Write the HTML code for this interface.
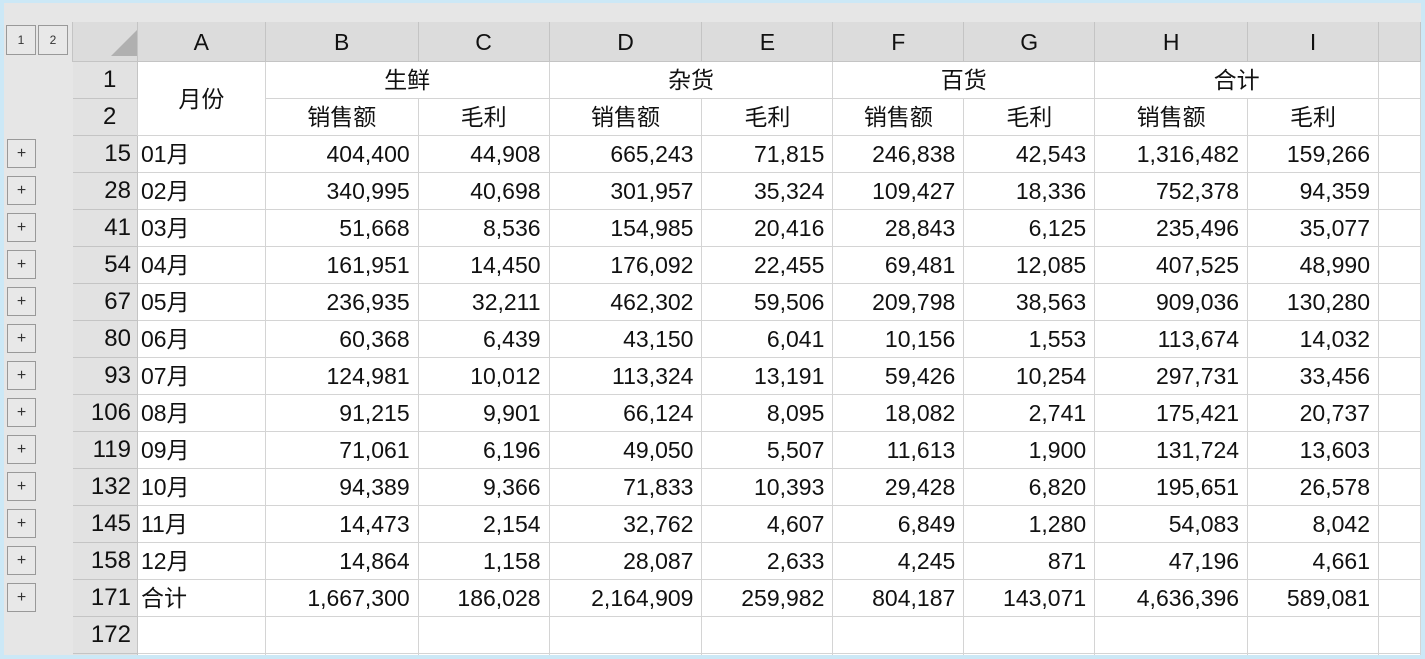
<!DOCTYPE html>
<html><head><meta charset="utf-8"><style>
body{margin:0;width:1425px;height:659px;background:#cce8f6;overflow:hidden;font-family:"Liberation Sans","Noto Sans CJK SC",sans-serif;}
#wrap{position:absolute;left:4px;top:3px;width:1417px;height:652px;background:#e6e6e6;overflow:hidden;}
table{position:absolute;left:68px;top:19px;border-collapse:collapse;table-layout:fixed;font-size:23px;color:#111;}
td{height:36px;padding:0 8px;border:1px solid #d4d4d4;background:#fff;white-space:nowrap;overflow:hidden;line-height:36px;}
tr.h td{height:39px;background:#dcdcdc;border-color:#c4c4c4;text-align:center;border-top:none}
td.r{background:#e2e2e2;text-align:right;padding:0 6px 0 0;border-color:#c4c4c4;border-left:none;font-size:24px}
td.n{text-align:right}
td.c{text-align:center}
.ob{position:absolute;width:29px;height:29px;border:1px solid #999;background:#e8e8e8;box-sizing:border-box;font-size:16px;text-align:center;line-height:27px;color:#333;display:flex;align-items:center;justify-content:center;}
.tri{position:absolute;left:38px;top:6px;width:0;height:0;border-left:28px solid transparent;border-bottom:28px solid #b0b0b0;}
</style></head><body><div id="wrap">
<div class="ob" style="left:2px;top:22px;width:30px;height:30px;font-size:12px">1</div>
<div class="ob" style="left:34px;top:22px;width:30px;height:30px;font-size:12px">2</div>
<table>
<colgroup><col style="width:65px"><col style="width:128px"><col style="width:153px"><col style="width:131px"><col style="width:153px"><col style="width:131px"><col style="width:131px"><col style="width:131px"><col style="width:153px"><col style="width:131px"><col style="width:42px"></colgroup>
<tr class="h"><td style="position:relative;background:#dcdcdc"><div class="tri"></div></td><td>A</td><td>B</td><td>C</td><td>D</td><td>E</td><td>F</td><td>G</td><td>H</td><td>I</td><td></td></tr>
<tr><td class="r" style="text-align:center;padding:0 0 0 10px">1</td><td rowspan="2" class="c">月份</td><td colspan="2" class="c">生鲜</td><td colspan="2" class="c">杂货</td><td colspan="2" class="c">百货</td><td colspan="2" class="c">合计</td><td></td></tr>
<tr><td class="r" style="text-align:center;padding:0 0 0 10px">2</td><td class="c">销售额</td><td class="c">毛利</td><td class="c">销售额</td><td class="c">毛利</td><td class="c">销售额</td><td class="c">毛利</td><td class="c">销售额</td><td class="c">毛利</td><td></td></tr>
<tr><td class="r">15</td><td style="padding-left:3px">01月</td><td class="n">404,400</td><td class="n">44,908</td><td class="n">665,243</td><td class="n">71,815</td><td class="n">246,838</td><td class="n">42,543</td><td class="n">1,316,482</td><td class="n">159,266</td><td></td></tr>
<tr><td class="r">28</td><td style="padding-left:3px">02月</td><td class="n">340,995</td><td class="n">40,698</td><td class="n">301,957</td><td class="n">35,324</td><td class="n">109,427</td><td class="n">18,336</td><td class="n">752,378</td><td class="n">94,359</td><td></td></tr>
<tr><td class="r">41</td><td style="padding-left:3px">03月</td><td class="n">51,668</td><td class="n">8,536</td><td class="n">154,985</td><td class="n">20,416</td><td class="n">28,843</td><td class="n">6,125</td><td class="n">235,496</td><td class="n">35,077</td><td></td></tr>
<tr><td class="r">54</td><td style="padding-left:3px">04月</td><td class="n">161,951</td><td class="n">14,450</td><td class="n">176,092</td><td class="n">22,455</td><td class="n">69,481</td><td class="n">12,085</td><td class="n">407,525</td><td class="n">48,990</td><td></td></tr>
<tr><td class="r">67</td><td style="padding-left:3px">05月</td><td class="n">236,935</td><td class="n">32,211</td><td class="n">462,302</td><td class="n">59,506</td><td class="n">209,798</td><td class="n">38,563</td><td class="n">909,036</td><td class="n">130,280</td><td></td></tr>
<tr><td class="r">80</td><td style="padding-left:3px">06月</td><td class="n">60,368</td><td class="n">6,439</td><td class="n">43,150</td><td class="n">6,041</td><td class="n">10,156</td><td class="n">1,553</td><td class="n">113,674</td><td class="n">14,032</td><td></td></tr>
<tr><td class="r">93</td><td style="padding-left:3px">07月</td><td class="n">124,981</td><td class="n">10,012</td><td class="n">113,324</td><td class="n">13,191</td><td class="n">59,426</td><td class="n">10,254</td><td class="n">297,731</td><td class="n">33,456</td><td></td></tr>
<tr><td class="r">106</td><td style="padding-left:3px">08月</td><td class="n">91,215</td><td class="n">9,901</td><td class="n">66,124</td><td class="n">8,095</td><td class="n">18,082</td><td class="n">2,741</td><td class="n">175,421</td><td class="n">20,737</td><td></td></tr>
<tr><td class="r">119</td><td style="padding-left:3px">09月</td><td class="n">71,061</td><td class="n">6,196</td><td class="n">49,050</td><td class="n">5,507</td><td class="n">11,613</td><td class="n">1,900</td><td class="n">131,724</td><td class="n">13,603</td><td></td></tr>
<tr><td class="r">132</td><td style="padding-left:3px">10月</td><td class="n">94,389</td><td class="n">9,366</td><td class="n">71,833</td><td class="n">10,393</td><td class="n">29,428</td><td class="n">6,820</td><td class="n">195,651</td><td class="n">26,578</td><td></td></tr>
<tr><td class="r">145</td><td style="padding-left:3px">11月</td><td class="n">14,473</td><td class="n">2,154</td><td class="n">32,762</td><td class="n">4,607</td><td class="n">6,849</td><td class="n">1,280</td><td class="n">54,083</td><td class="n">8,042</td><td></td></tr>
<tr><td class="r">158</td><td style="padding-left:3px">12月</td><td class="n">14,864</td><td class="n">1,158</td><td class="n">28,087</td><td class="n">2,633</td><td class="n">4,245</td><td class="n">871</td><td class="n">47,196</td><td class="n">4,661</td><td></td></tr>
<tr><td class="r">171</td><td style="padding-left:3px">合计</td><td class="n">1,667,300</td><td class="n">186,028</td><td class="n">2,164,909</td><td class="n">259,982</td><td class="n">804,187</td><td class="n">143,071</td><td class="n">4,636,396</td><td class="n">589,081</td><td></td></tr>
<tr><td class="r">172</td><td></td><td></td><td></td><td></td><td></td><td></td><td></td><td></td><td></td><td></td></tr>
<tr><td class="r">173</td><td></td><td></td><td></td><td></td><td></td><td></td><td></td><td></td><td></td><td></td></tr>
</table>
<div class="ob" style="left:3px;top:136px">+</div>
<div class="ob" style="left:3px;top:173px">+</div>
<div class="ob" style="left:3px;top:210px">+</div>
<div class="ob" style="left:3px;top:247px">+</div>
<div class="ob" style="left:3px;top:284px">+</div>
<div class="ob" style="left:3px;top:321px">+</div>
<div class="ob" style="left:3px;top:358px">+</div>
<div class="ob" style="left:3px;top:395px">+</div>
<div class="ob" style="left:3px;top:432px">+</div>
<div class="ob" style="left:3px;top:469px">+</div>
<div class="ob" style="left:3px;top:506px">+</div>
<div class="ob" style="left:3px;top:543px">+</div>
<div class="ob" style="left:3px;top:580px">+</div>
</div></body></html>
